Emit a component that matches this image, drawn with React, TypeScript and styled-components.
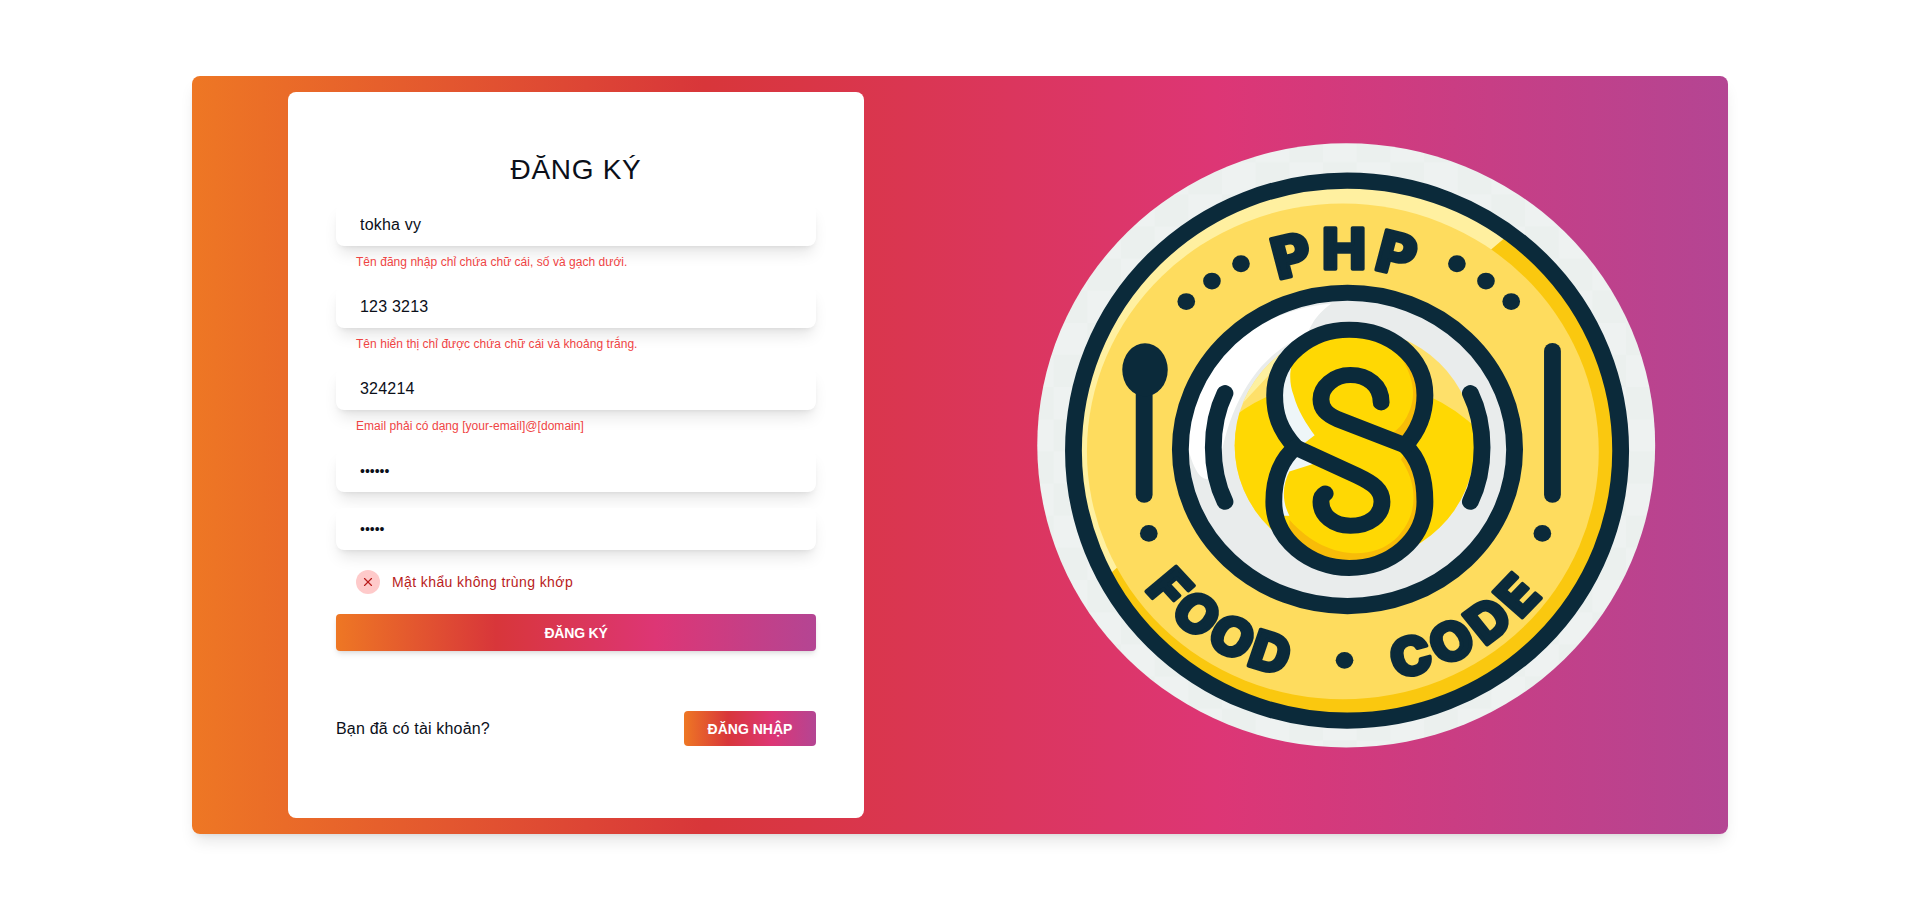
import styled, { createGlobalStyle } from 'styled-components';
import { X } from 'lucide-react';

const brandGradient = 'linear-gradient(to right, #ee7724, #d8363a, #dd3675, #b44593)';

const GlobalStyle = createGlobalStyle`
  html, body {
    margin: 0;
    background: #fff;
  }
  * {
    box-sizing: border-box;
  }
  body {
    font-family: "Liberation Sans", Arial, sans-serif;
    color: #0b0f19;
  }
`;

const Page = styled.div`
  height: 909px;
  padding: 76px 192px 75px;
  overflow: hidden;
`;

const Banner = styled.main`
  display: grid;
  grid-template-columns: 1fr 1fr;
  height: 758px;
  border-radius: 8px;
  background: ${brandGradient};
  box-shadow: 0 10px 15px -3px rgba(0, 0, 0, 0.1), 0 4px 6px -4px rgba(0, 0, 0, 0.1);
`;

const FormColumn = styled.section`
  display: flex;
  justify-content: center;
  padding: 16px 0;
`;

const FormCard = styled.div`
  width: 576px;
  padding: 48px;
  border-radius: 8px;
  background: #fff;
`;

const Title = styled.h1`
  margin: 0 0 4px;
  padding: 12px 0;
  font-size: 28px;
  font-weight: 400;
  line-height: 36px;
  letter-spacing: 0.7px;
  text-align: center;
  color: #0b0f19;
`;

const Input = styled.input`
  display: block;
  width: 100%;
  height: 42px;
  padding: 0 24px;
  border: 0;
  border-radius: 8px;
  outline: 0;
  background: #fff;
  font-family: inherit;
  font-size: 16px;
  letter-spacing: 0.2px;
  color: #0b0f19;
  box-shadow: 0 10px 15px -3px rgba(0, 0, 0, 0.1), 0 4px 6px -4px rgba(0, 0, 0, 0.1);
`;

const PasswordInput = styled(Input).attrs({ type: 'password' })`
  font-size: 14px;
  letter-spacing: 0;
`;

const Field = styled.div`
  margin-bottom: 16px;
`;

const FieldError = styled.p`
  margin: 0;
  padding: 8px 0 0 20px;
  font-size: 12px;
  line-height: 16px;
  letter-spacing: 0.04px;
  color: #ef4444;
`;

const Mismatch = styled.div`
  display: flex;
  align-items: center;
  gap: 12px;
  margin-top: 20px;
  padding-left: 20px;
  font-size: 14px;
  font-weight: 500;
  line-height: 24px;
  letter-spacing: 0.4px;
  color: #b91c1c;
`;

const MismatchIcon = styled.span`
  display: flex;
  align-items: center;
  justify-content: center;
  width: 24px;
  height: 24px;
  border-radius: 50%;
  background: #fecaca;
  color: #b91c1c;
`;

const SubmitButton = styled.button`
  display: block;
  width: 100%;
  height: 37px;
  margin-top: 20px;
  border: 0;
  border-radius: 4px;
  background: ${brandGradient};
  font-family: inherit;
  font-size: 14px;
  font-weight: 600;
  letter-spacing: -0.2px;
  color: #fff;
  box-shadow: 0 4px 6px -1px rgba(0, 0, 0, 0.1), 0 2px 4px -2px rgba(0, 0, 0, 0.1);
`;

const Footer = styled.div`
  display: flex;
  align-items: center;
  justify-content: space-between;
  margin-top: 60px;
  font-size: 16px;
  letter-spacing: 0.18px;
`;

const LoginButton = styled.button`
  width: 132px;
  height: 35px;
  border: 0;
  border-radius: 4px;
  background: ${brandGradient};
  font-family: inherit;
  font-size: 14px;
  font-weight: 600;
  color: #fff;
`;

const LogoColumn = styled.section`
  display: flex;
  align-items: center;
  justify-content: center;
  padding: 0 0 20px 12px;
`;

const LogoSvg = styled.svg`
  display: block;
  width: 660px;
  height: 630px;
`;

const LogoText = styled.text<{ $size: number; $spacing: number }>`
  font-family: "Inter", "Open Sans", sans-serif;
  font-size: ${props => props.$size}px;
  font-weight: 800;
  letter-spacing: ${props => props.$spacing}px;
  fill: #0b2a3a;
  stroke: #0b2a3a;
  stroke-width: 9px;
  stroke-linejoin: round;
`;

const dots: ReadonlyArray<[number, number]> = [
  [395, 427],
  [456, 376],
  [525, 333],
  [1167, 427],
  [1107, 376],
  [1038, 333],
  [306, 1004],
  [1241, 1004],
  [771, 1320],
];

const knotOutline =
  'M655 790C615 745 605 705 605 660C605 565 690 497 782 497C880 497 962 565 962 660C962 710 945 750 915 785C945 815 962 860 962 925C962 1020 880 1090 782 1090C690 1090 603 1020 603 925C603 860 625 815 655 790Z';

// the logo is a stretched picture in the original, hence preserveAspectRatio none
const Logo = () => (
  <LogoSvg viewBox="0 0 1568 1568" preserveAspectRatio="none">
    <defs>
      <pattern id="checker" width="160" height="160" patternUnits="userSpaceOnUse">
        <rect width="160" height="160" fill="#eef2f1" />
        <rect width="80" height="80" fill="#ebf0ee" />
        <rect x="80" y="80" width="80" height="80" fill="#ebf0ee" />
      </pattern>
      <clipPath id="upper-left">
        <polygon points="0,0 1230,0 1150,270 235,1085 0,1300" />
      </clipPath>
      <clipPath id="knot">
        <path d={knotOutline} />
      </clipPath>
      <clipPath id="yolk">
        <ellipse cx="795" cy="785" rx="285" ry="290" />
      </clipPath>
      <path id="php-arc" d="M320 795A458 450 0 0 1 1236 795" />
      <path id="food-arc" d="M190 900A590 575 0 0 0 700 1372" />
      <path id="code-arc" d="M850 1372A590 575 0 0 0 1362 900" />
    </defs>

    <ellipse cx="775" cy="785" rx="734" ry="752" fill="url(#checker)" />
    <ellipse cx="777" cy="798" rx="650" ry="672" fill="#fac80f" />
    <ellipse cx="777" cy="798" rx="650" ry="672" fill="#fff0a0" clipPath="url(#upper-left)" />
    <ellipse cx="767" cy="800" rx="608" ry="617" fill="#fedc5e" />
    <ellipse cx="777" cy="798" rx="650" ry="672" fill="none" stroke="#0b2a3a" strokeWidth="40" />

    <ellipse cx="778" cy="795" rx="397" ry="390" fill="#e9ecec" />
    <path d="M400 795C400 600 540 450 740 432C690 470 690 500 680 510C560 560 490 690 470 860C440 880 420 870 400 795Z" fill="#fff" />
    <g clipPath="url(#yolk)">
      <rect x="500" y="490" width="600" height="600" fill="#fee06a" />
      <path d="M500 490H760L600 600L520 690L500 760Z" fill="#fdf0a0" />
      <ellipse cx="780" cy="970" rx="400" ry="350" fill="#ffd803" />
    </g>
    <ellipse cx="778" cy="795" rx="397" ry="390" fill="none" stroke="#0b2a3a" strokeWidth="40" />

    <path d={knotOutline} fill="#ffd803" />
    <g clipPath="url(#knot)">
      <path d="M590 480H740C660 520 625 590 650 660C660 700 680 730 700 760L650 800L580 700Z" fill="#eef6f8" />
      <path d="M700 830L640 850C625 880 620 920 640 960L600 960L590 820L650 780Z" fill="#eef6f8" />
      <path d="M860 510C920 570 950 640 925 700C910 740 880 765 850 770L915 790L990 660L920 500Z" fill="#f8bc08" />
      <path d="M905 820C945 880 950 960 890 1020C830 1075 720 1065 640 970L640 1100H990V850L930 780Z" fill="#f8bc08" />
    </g>
    <g fill="none" stroke="#0b2a3a" strokeWidth="40" strokeLinecap="round" strokeLinejoin="round">
      <path d={knotOutline} />
      <path d="M858 678C858 635 825 610 785 610C745 610 715 640 715 670C715 695 730 708 755 720L915 785" />
      <path d="M655 790L800 860C840 880 860 895 860 925C860 960 830 985 785 985C745 985 715 960 715 925C715 915 720 908 725 905" />
      <path d="M487 655C450 735 450 845 487 925" />
      <path d="M1070 655C1107 735 1107 845 1070 925" />
      <path d="M295 650V908" />
      <path d="M1265 550V908" />
    </g>
    <ellipse cx="297" cy="597" rx="54" ry="66" fill="#0b2a3a" />
    {dots.map(([cx, cy]) => (
      <circle key={`${cx}-${cy}`} cx={cx} cy={cy} r="21" fill="#0b2a3a" />
    ))}

    <LogoText $size={140} $spacing={16} textAnchor="middle">
      <textPath href="#php-arc" startOffset="50%">PHP</textPath>
    </LogoText>
    <LogoText $size={130} $spacing={10} textAnchor="middle">
      <textPath href="#food-arc" startOffset="63.5%">FOOD</textPath>
    </LogoText>
    <LogoText $size={130} $spacing={14} textAnchor="middle">
      <textPath href="#code-arc" startOffset="34.5%">CODE</textPath>
    </LogoText>
  </LogoSvg>
);

const App = () => (
  <Page>
    <GlobalStyle />
    <Banner>
      <FormColumn>
        <FormCard>
          <Title>ĐĂNG KÝ</Title>
          <Field>
            <Input type="text" defaultValue="tokha vy" />
            <FieldError>Tên đăng nhập chỉ chứa chữ cái, số và gạch dưới.</FieldError>
          </Field>
          <Field>
            <Input type="text" defaultValue="123 3213" />
            <FieldError>Tên hiển thị chỉ được chứa chữ cái và khoảng trắng.</FieldError>
          </Field>
          <Field>
            <Input type="text" defaultValue="324214" />
            <FieldError>Email phải có dạng [your-email]@[domain]</FieldError>
          </Field>
          <Field>
            <PasswordInput defaultValue="123456" />
          </Field>
          <PasswordInput defaultValue="12345" />
          <Mismatch>
            <MismatchIcon>
              <X size={14} strokeWidth={2} />
            </MismatchIcon>
            Mật khẩu không trùng khớp
          </Mismatch>
          <SubmitButton type="button">ĐĂNG KÝ</SubmitButton>
          <Footer>
            <span>Bạn đã có tài khoản?</span>
            <LoginButton type="button">ĐĂNG NHẬP</LoginButton>
          </Footer>
        </FormCard>
      </FormColumn>
      <LogoColumn>
        <Logo />
      </LogoColumn>
    </Banner>
  </Page>
);

export default App;
